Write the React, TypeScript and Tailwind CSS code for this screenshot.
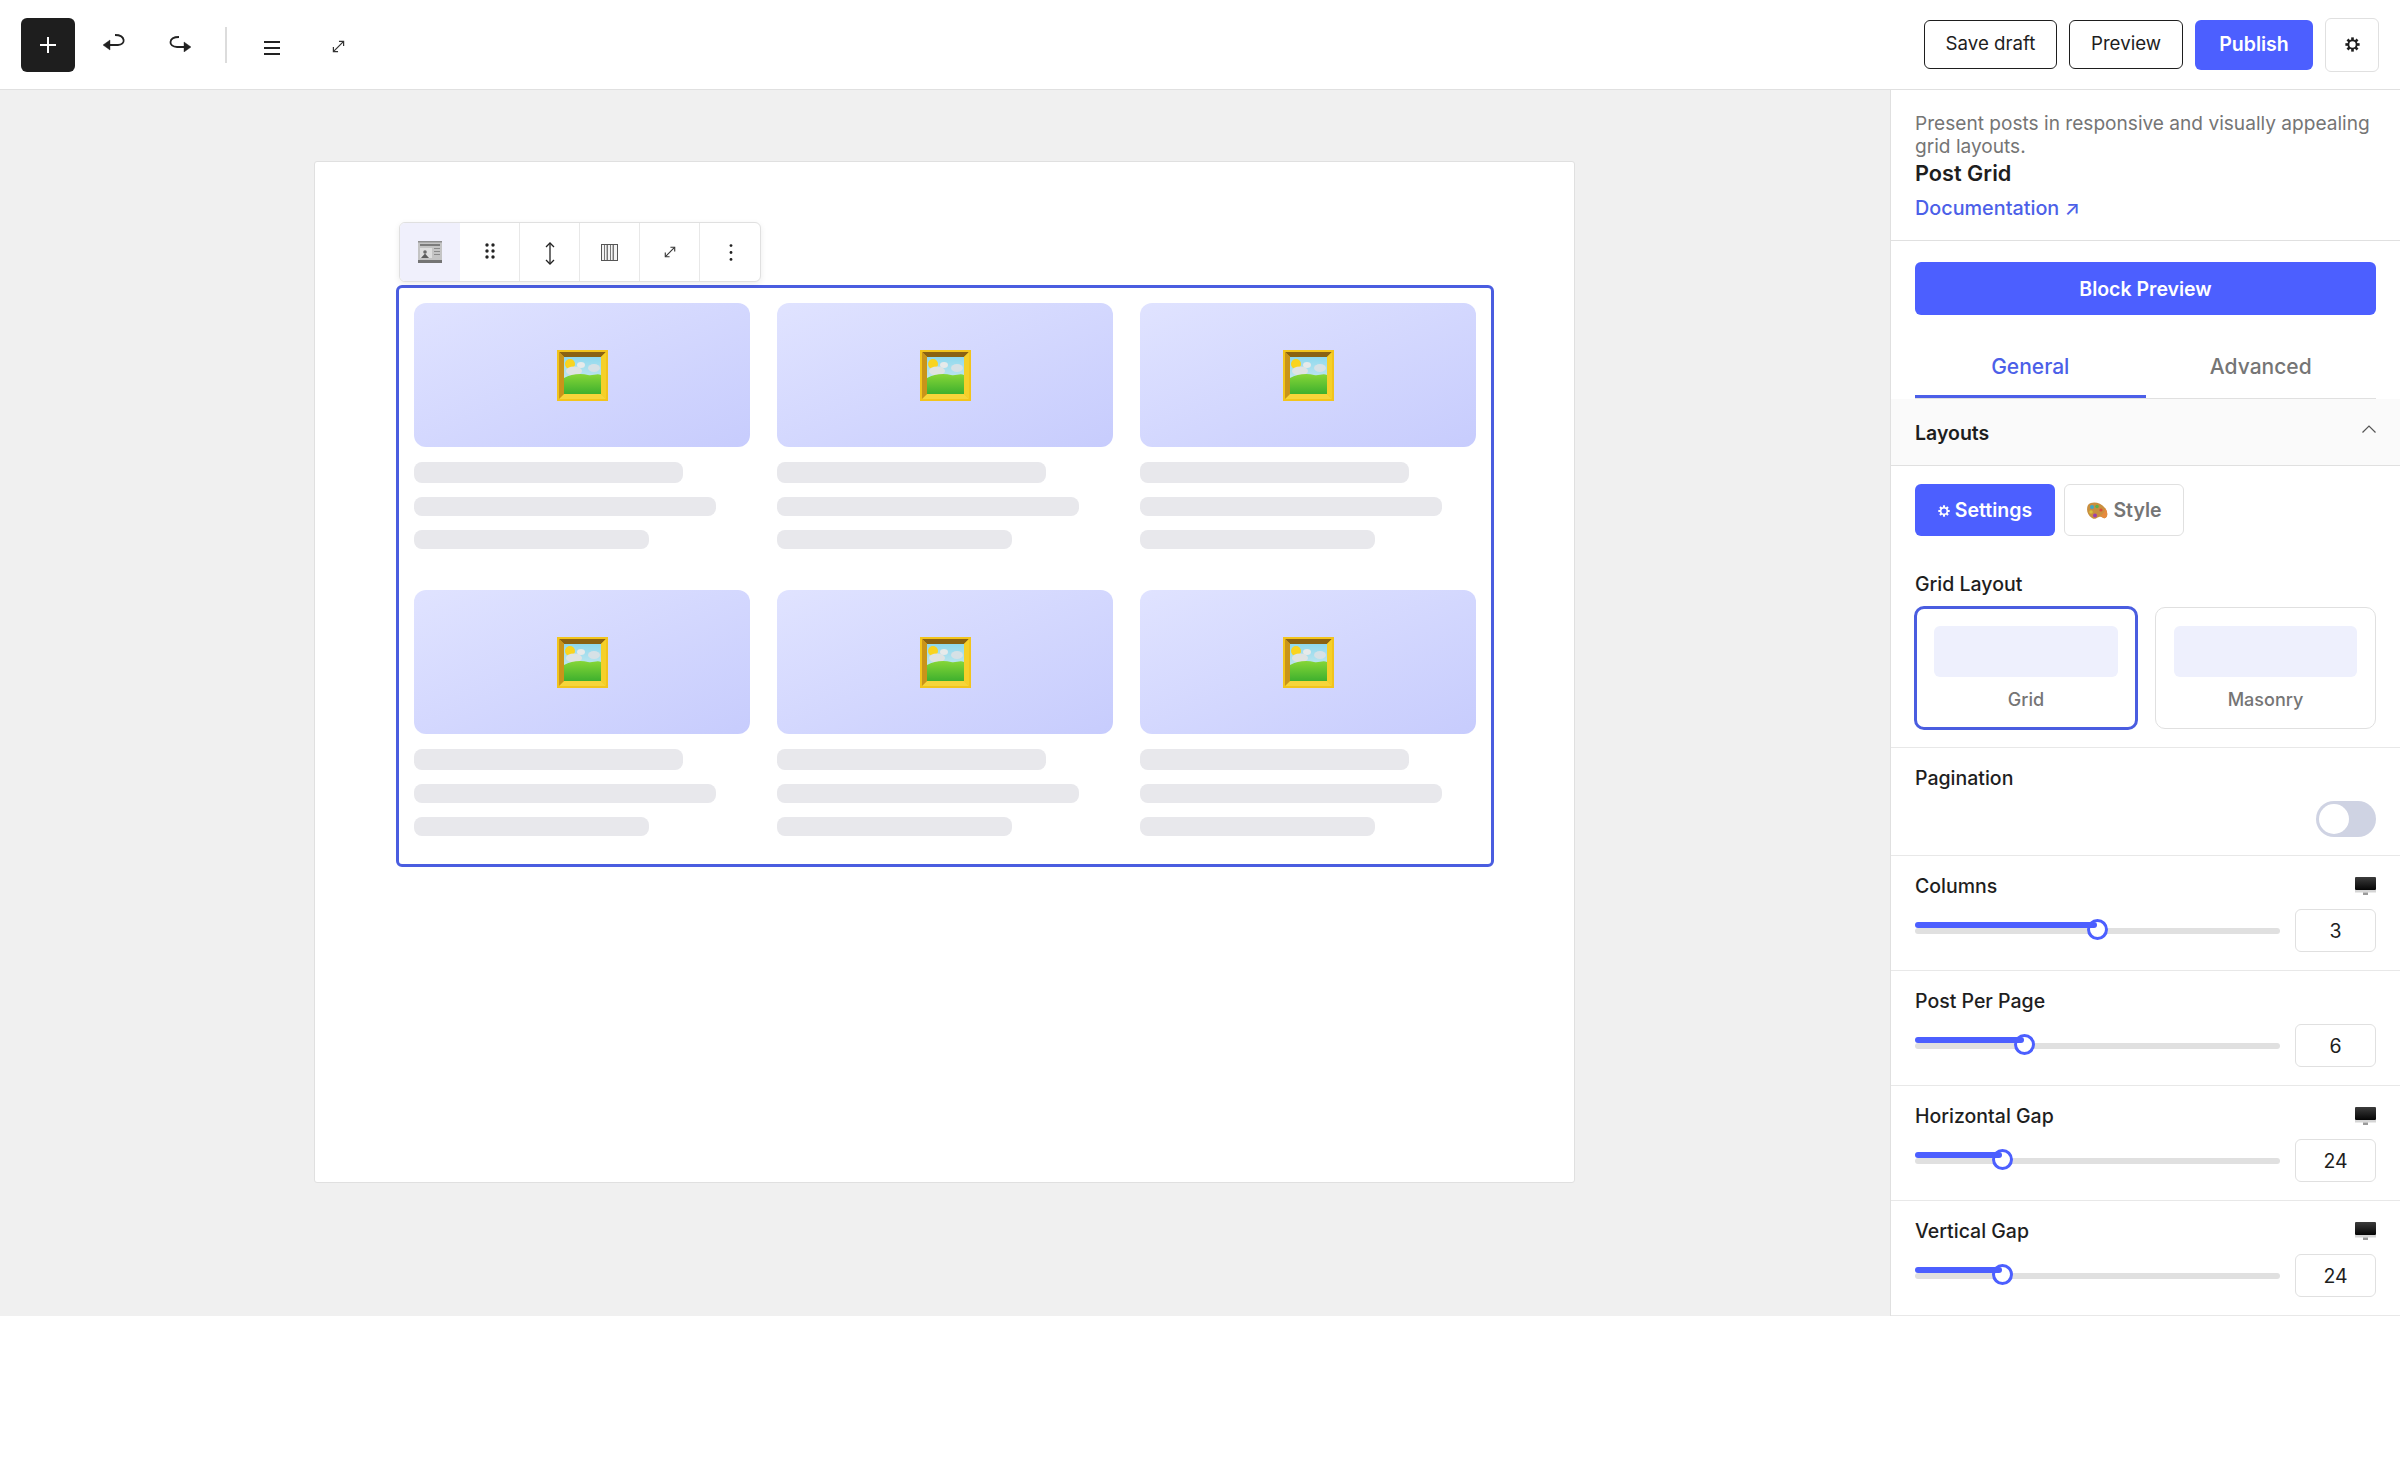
import React from "react";

const blue = "bg-[#4c5fff]";

function PictureEmoji() {
  return (
    <svg width="51" height="51" viewBox="0 0 51 51">
      <defs>
        <linearGradient id="sky" x1="0" y1="0" x2="0" y2="1">
          <stop offset="0" stopColor="#8fd9ee" />
          <stop offset="1" stopColor="#e2eeee" />
        </linearGradient>
        <linearGradient id="hill" x1="0" y1="0" x2="0" y2="1">
          <stop offset="0" stopColor="#86d637" />
          <stop offset="1" stopColor="#3eb02e" />
        </linearGradient>
      </defs>
      <rect width="51" height="51" fill="#f2c41c" />
      <polygon points="2,2 49,2 44,7 7,7" fill="#8a6212" />
      <polygon points="2,49 49,49 44,44 7,44" fill="#f6d53a" />
      <polygon points="2,2 7,7 7,44 2,49" fill="#c9941a" />
      <polygon points="49,2 44,7 44,44 49,49" fill="#f5d02a" />
      <rect x="7" y="7" width="37" height="37" fill="url(#sky)" />
      <circle cx="13" cy="14" r="5" fill="#f9d41f" />
      <ellipse cx="17" cy="21" rx="8" ry="4.5" fill="#dfe3e3" />
      <ellipse cx="24" cy="15" rx="4" ry="3" fill="#e6eaea" />
      <ellipse cx="37" cy="18" rx="6" ry="4" fill="#d6e1e6" />
      <path d="M7 28 C14 24 24 23 31 25 C36 26 40 23 44 25 V44 H7 Z" fill="url(#hill)" />
    </svg>
  );
}

function NewspaperEmoji() {
  return (
    <svg width="24" height="22" viewBox="0 0 24 22">
      <rect x="0" y="0" width="24" height="22" fill="#c4c4c4" />
      <rect x="0" y="0" width="24" height="1.5" fill="#8f8f8f" />
      <rect x="2" y="3" width="20" height="2" fill="#7c7c7c" />
      <rect x="2" y="7" width="12" height="10" fill="#dedede" />
      <circle cx="7" cy="11" r="1.8" fill="#6a6a6a" />
      <path d="M3 17 L7 12.5 L11 17 Z" fill="#5c5c5c" />
      <rect x="16" y="7" width="6" height="1" fill="#8a8a8a" />
      <rect x="16" y="10" width="6" height="1" fill="#8a8a8a" />
      <rect x="16" y="13" width="6" height="1" fill="#8a8a8a" />
      <rect x="0" y="19" width="24" height="3" fill="#747474" />
    </svg>
  );
}

function PaletteEmoji() {
  return (
    <svg width="22" height="18" viewBox="0 0 22 18">
      <path d="M2 3 C6 -1 14 0 19 6 C22 10 22 15 19 16 C17 17 16 14 13 15 C10 16 9 18 6 16 C1 13 0 7 2 3 Z" fill="#c98f3f" />
      <path d="M19 6 C22 10 22 15 19 16 C17 17 16 14 14 14 C17 12 19 10 19 6 Z" fill="#e58a3c" />
      <circle cx="6" cy="5" r="2" fill="#3fa7c9" />
      <circle cx="11" cy="4.5" r="1.8" fill="#5fb04a" />
      <circle cx="5" cy="10" r="1.8" fill="#d8c23a" />
      <circle cx="9" cy="13.5" r="2" fill="#9a3fb0" />
      <circle cx="15" cy="8" r="1.6" fill="#d94a3a" />
    </svg>
  );
}

function MonitorEmoji() {
  return (
    <svg width="21" height="19" viewBox="0 0 21 19">
      <defs>
        <linearGradient id="scr" x1="0" y1="0" x2="0" y2="1">
          <stop offset="0" stopColor="#3c3c3c" />
          <stop offset="1" stopColor="#050505" />
        </linearGradient>
      </defs>
      <rect x="0" y="0" width="21" height="13" rx="1" fill="url(#scr)" />
      <rect x="0" y="13" width="21" height="2.5" fill="#d5d5d5" />
      <rect x="8" y="15.5" width="5" height="2.5" fill="#9a9a9a" />
    </svg>
  );
}

function Gear({ size, color }: { size: number; color: string }) {
  const teeth = [0, 45, 90, 135, 180, 225, 270, 315];
  return (
    <svg width={size} height={size} viewBox="0 0 16 16">
      <circle cx="8" cy="8" r="4.4" fill="none" stroke={color} strokeWidth="2" />
      {teeth.map((a) => (
        <rect key={a} x="6.6" y="0.4" width="2.8" height="3.2" fill={color} transform={`rotate(${a} 8 8)`} />
      ))}
    </svg>
  );
}

function ExpandIcon({ size = 12 }: { size?: number }) {
  return (
    <svg width={size} height={size} viewBox="0 0 14 14" fill="none" stroke="#333" strokeWidth="1.3">
      <path d="M2 12 L12 2" />
      <path d="M7.5 1.5 H12.5 V6.5" />
      <path d="M1.5 7.5 V12.5 H6.5" />
    </svg>
  );
}

function Card() {
  return (
    <div className="flex flex-col">
      <div className="flex h-[144px] items-center justify-center rounded-[12px] bg-gradient-to-br from-[#e0e3ff] to-[#c7ccfd]">
        <PictureEmoji />
      </div>
      <div className="mt-[15px] h-[21px] w-[269px] rounded-[8px] bg-[#e8e8ec]" />
      <div className="mt-[14px] h-[19px] w-[302px] rounded-[8px] bg-[#e8e8ec]" />
      <div className="mt-[14px] h-[19px] w-[235px] rounded-[8px] bg-[#e8e8ec]" />
    </div>
  );
}

function Toolbar() {
  const cell = "flex h-full w-[60px] items-center justify-center border-r border-[#e8e8e8]";
  return (
    <div className="absolute left-[84px] top-[60px] flex h-[60px] w-[362px] overflow-hidden rounded-[6px] border border-[#e0e0e0] bg-white shadow-[0_2px_6px_rgba(0,0,0,0.08)]">
      <div className="flex h-full w-[60px] items-center justify-center bg-[#f0f0fc]">
        <NewspaperEmoji />
      </div>
      <div className={cell}>
        <svg className="mb-[2px]" width="10" height="16" viewBox="0 0 10 16" fill="#222">
          <circle cx="2" cy="2" r="1.7" /><circle cx="8" cy="2" r="1.7" />
          <circle cx="2" cy="8" r="1.7" /><circle cx="8" cy="8" r="1.7" />
          <circle cx="2" cy="14" r="1.7" /><circle cx="8" cy="14" r="1.7" />
        </svg>
      </div>
      <div className={cell}>
        <svg className="mt-[2px]" width="10" height="23" viewBox="0 0 10 23" fill="none" stroke="#222" strokeWidth="1.3">
          <path d="M5 1 V22" /><path d="M1 5 L5 1 L9 5" /><path d="M1 18 L5 22 L9 18" />
        </svg>
      </div>
      <div className={cell}>
        <svg width="17" height="17" viewBox="0 0 17 17" fill="#f4f4f4" stroke="#555" strokeWidth="1" shapeRendering="crispEdges">
          <rect x="0.5" y="0.5" width="16" height="16" />
          <path d="M3.5 1 V16 M6.5 1 V16 M9.5 1 V16 M12.5 1 V16" fill="none" stroke="#777" />
          <path d="M5.5 1 V16 M11.5 1 V16" fill="none" stroke="#bbb" />
        </svg>
      </div>
      <div className={cell}>
        <ExpandIcon size={12} />
      </div>
      <div className="flex h-full w-[60px] items-center justify-center">
        <svg className="ml-[2px]" width="4" height="17" viewBox="0 0 4 17" fill="#222">
          <circle cx="2" cy="1.6" r="1.4" /><circle cx="2" cy="8.5" r="1.4" /><circle cx="2" cy="15.4" r="1.4" />
        </svg>
      </div>
    </div>
  );
}

function Slider({ label, value, thumb, monitor }: { label: string; value: string; thumb: number; monitor?: boolean }) {
  return (
    <div className="h-[115px] border-b border-[#e8e8e8] px-[24px] pt-[19px]">
      <div className="flex h-[22px] items-center justify-between">
        <span className="text-[19.5px] font-medium leading-[22px] text-[#1e1e1e]">{label}</span>
        {monitor && <MonitorEmoji />}
      </div>
      <div className="mt-[12px] flex items-center gap-[15px]">
        <div className="relative h-[43px] w-[365px]">
          <div className="absolute left-0 right-0 top-[19px] h-[6px] rounded-full bg-[#e0e0e0]" />
          <div
            className="absolute top-[10px] h-[21px] w-[21px] rounded-full border-[3px] border-[#4c5fff] bg-white"
            style={{ left: thumb - 10 }}
          />
          <div className="absolute left-0 top-[13px] h-[6px] rounded-full bg-[#4c5fff]" style={{ width: thumb }} />
        </div>
        <div className="flex h-[43px] w-[81px] items-center justify-center rounded-[6px] border border-[#e0e0e0] pt-[2px] text-[19.5px] text-[#1e1e1e]">
          {value}
        </div>
      </div>
    </div>
  );
}

export default function App() {
  return (
    <div className="min-h-[1470px] bg-white [font-family:Inter,sans-serif]">
      <header className="flex h-[90px] items-center justify-between border-b border-[#e0e0e0] bg-white pl-[21px] pr-[21px]">
        <div className="flex items-center">
          <button className="flex h-[54px] w-[54px] items-center justify-center rounded-[6px] bg-[#1e1e1e]">
            <svg width="18" height="18" viewBox="0 0 18 18" stroke="#fff" strokeWidth="2">
              <path d="M9 1 V17 M1 9 H17" />
            </svg>
          </button>
          <div className="mb-[6px] ml-[27px] flex w-[24px] justify-center">
            <svg width="24" height="18" viewBox="0 0 24 18" fill="none" stroke="#222" strokeWidth="1.8">
              <path d="M6 12 H16 C24 12 24 2 13 2" />
              <path d="M1 12 L8 7 V17 Z" fill="#222" strokeWidth="0.4" />
            </svg>
          </div>
          <div className="mb-[4px] ml-[42px] flex w-[24px] justify-center">
            <svg width="24" height="18" viewBox="0 0 24 18" fill="none" stroke="#222" strokeWidth="1.8">
              <path d="M18 13 H9 C0 13 0 3 11 3" />
              <path d="M23 13 L16 8 V18 Z" fill="#222" strokeWidth="0.4" />
            </svg>
          </div>
          <div className="ml-[33px] h-[36px] w-[2px] bg-[#dcdcdc]" />
          <div className="ml-[37px] mt-[6px]">
            <svg width="16" height="14" viewBox="0 0 16 14" fill="#222">
              <rect y="0" width="16" height="2" /><rect y="6" width="16" height="2" /><rect y="12" width="16" height="2" />
            </svg>
          </div>
          <div className="ml-[52px] mt-[3px]">
            <ExpandIcon size={13} />
          </div>
        </div>
        <div className="flex items-center gap-[12px] text-[18.7px]">
          <button className="h-[49px] w-[133px] rounded-[6px] border border-[#1e1e1e] text-[#1e1e1e]">Save draft</button>
          <button className="h-[49px] w-[114px] rounded-[6px] border border-[#1e1e1e] text-[#1e1e1e]">Preview</button>
          <button className={`h-[50px] w-[118px] rounded-[6px] ${blue} text-[19.5px] font-semibold text-white`}>Publish</button>
          <button className="flex h-[54px] w-[54px] items-center justify-center rounded-[6px] border border-[#e0e0e0]">
            <Gear size={15} color="#1e1e1e" />
          </button>
        </div>
      </header>

      <div className="flex h-[1226px]">
        <main className="flex-1 bg-[#f0f0f0] pl-[314px] pr-[315px] pt-[71px]">
          <div className="relative h-[1022px] rounded-[3px] border border-[#e0e0e0] bg-white pl-[81px] pr-[80px] pt-[123px]">
            <Toolbar />
            <div className="grid grid-cols-3 gap-x-[27px] gap-y-[41px] rounded-[6px] border-[3px] border-[#4a5de0] px-[15px] pb-[28px] pt-[15px]">
              <Card /><Card /><Card /><Card /><Card /><Card />
            </div>
          </div>
        </main>

        <aside className="w-[510px] border-l border-[#e0e0e0] bg-white">
          <div className="h-[151px] border-b border-[#e0e0e0] px-[24px] pt-[22px]">
            <p className="text-[19.1px] leading-[23px] text-[#757575]">
              Present posts in responsive and visually appealing grid layouts.
            </p>
            <h2 className="text-[21.7px] font-semibold leading-[30px] text-[#1e1e1e]">Post Grid</h2>
            <a className="mt-[8px] block text-[19.8px] font-medium leading-[24px] text-[#4c5fe8]">Documentation ↗</a>
          </div>

          <div className="px-[24px] pt-[21px]">
            <button className={`h-[53px] w-[461px] rounded-[6px] ${blue} pt-[2px] text-[19.5px] font-semibold text-white`}>
              Block Preview
            </button>
            <div className="mt-[18px] flex h-[66px] w-[461px] border-b border-[#e0e0e0]">
              <div className="flex-1 border-b-[3px] border-[#4c5fe8] pt-[18px] text-center text-[21px] font-medium text-[#4c5fe8]">
                General
              </div>
              <div className="flex-1 pt-[18px] text-center text-[21px] font-medium text-[#757575]">Advanced</div>
            </div>
          </div>

          <div className="flex h-[67px] items-center justify-between border-b border-[#e0e0e0] bg-[#fafafa] px-[24px]">
            <span className="pt-[3px] text-[19.5px] font-semibold text-[#1e1e1e]">Layouts</span>
            <svg className="mb-[6px]" width="14" height="8" viewBox="0 0 14 8" fill="none" stroke="#555" strokeWidth="1.2">
              <path d="M0.5 7.5 L7 1 L13.5 7.5" />
            </svg>
          </div>

          <div className="h-[282px] border-b border-[#e8e8e8] px-[24px] pt-[18px]">
            <div className="flex gap-[9px]">
              <button className={`flex h-[52px] w-[140px] items-center justify-center gap-[5px] rounded-[6px] ${blue} pt-[1px] text-[19.5px] font-semibold text-white`}>
                <Gear size={12} color="#fff" />
                Settings
              </button>
              <button className="flex h-[52px] w-[120px] items-center justify-center gap-[5px] rounded-[6px] border border-[#e0e0e0] pt-[2px] text-[19.5px] font-semibold text-[#757575]">
                <PaletteEmoji />
                Style
              </button>
            </div>
            <div className="mt-[36px] text-[19.5px] font-medium leading-[24px] text-[#1e1e1e]">Grid Layout</div>
            <div className="-ml-[1px] mt-[10px] flex gap-[17px]">
              <div className="h-[124px] w-[224px] rounded-[10px] border-[3px] border-[#4a5de0] px-[17px] pt-[17px]">
                <div className="h-[51px] rounded-[6px] bg-[#eef0fd]" />
                <div className="mt-[9px] text-center text-[18px] font-medium text-[#757575]">Grid</div>
              </div>
              <div className="mt-[1px] h-[122px] w-[221px] rounded-[10px] border border-[#e0e0e0] px-[18px] pt-[18px]">
                <div className="h-[51px] rounded-[6px] bg-[#eef0fd]" />
                <div className="mt-[9px] text-center text-[18px] font-medium text-[#757575]">Masonry</div>
              </div>
            </div>
          </div>

          <div className="h-[108px] border-b border-[#e8e8e8] px-[24px] pt-[19px]">
            <div className="text-[19.5px] font-medium leading-[22px] text-[#1e1e1e]">Pagination</div>
            <div className="mt-[12px] flex justify-end">
              <div className="flex h-[36px] w-[60px] items-center rounded-full bg-[#cfd3e3] pl-[3px]">
                <div className="h-[30px] w-[30px] rounded-full bg-white" />
              </div>
            </div>
          </div>

          <Slider label="Columns" value="3" thumb={182} monitor />
          <Slider label="Post Per Page" value="6" thumb={109} />
          <Slider label="Horizontal Gap" value="24" thumb={87} monitor />
          <Slider label="Vertical Gap" value="24" thumb={87} monitor />
        </aside>
      </div>
    </div>
  );
}
